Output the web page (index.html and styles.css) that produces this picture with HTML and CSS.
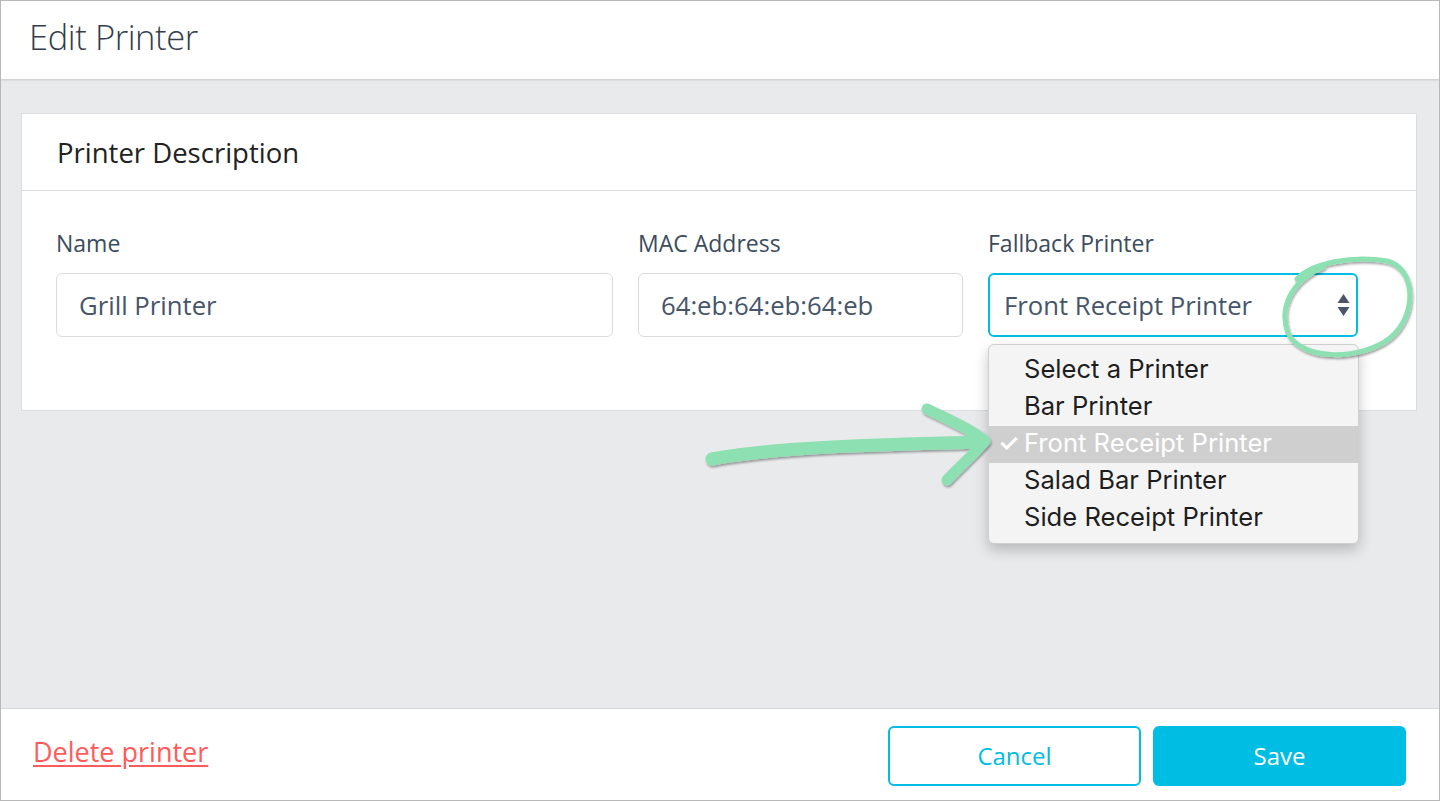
FILE: index.html
```html
<!DOCTYPE html>
<html lang="en">
<head>
    <meta charset="UTF-8">
    <meta name="viewport" content="width=device-width, initial-scale=1.0">
    <title>Edit Printer</title>
    <link rel="stylesheet" href="styles.css">
</head>
<body>
    <div class="window">
        <header class="topbar">
            <h1>Edit Printer</h1>
        </header>

        <main class="content">
            <section class="card">
                <h2 class="card-head">Printer Description</h2>
                <div class="card-body">
                    <div class="field">
                        <label for="printerName">Name</label>
                        <input type="text" id="printerName" value="Grill Printer" />
                    </div>
                    <div class="field">
                        <label for="macAddress">MAC Address</label>
                        <input type="text" id="macAddress" value="64:eb:64:eb:64:eb" />
                    </div>
                    <div class="field fallback">
                        <label>Fallback Printer</label>
                        <div class="select">
                            <span>Front Receipt Printer</span>
                            <svg class="arrows" width="13" height="26" viewBox="0 0 13 26">
                                <path d="M6.5 2 L12.5 11 L0.5 11 Z" fill="#4a5568" />
                                <path d="M6.5 24 L12.5 15 L0.5 15 Z" fill="#4a5568" />
                            </svg>
                        </div>
                        <!-- open native menu -->
                        <ul class="menu">
                            <li>Select a Printer</li>
                            <li>Bar Printer</li>
                            <li class="checked"><span class="tick">&#10003;</span>Front Receipt Printer</li>
                            <li>Salad Bar Printer</li>
                            <li>Side Receipt Printer</li>
                        </ul>
                    </div>
                </div>
            </section>
        </main>

        <footer class="actions">
            <a href="#" class="delete">Delete printer</a>
            <div class="buttons">
                <button class="btn-outline">Cancel</button>
                <button class="btn-primary">Save</button>
            </div>
        </footer>

        <!-- hand drawn marks -->
        <svg class="marks" width="1440" height="801" viewBox="0 0 1440 801">
            <defs>
                <filter id="shade" x="-10%" y="-10%" width="120%" height="130%">
                    <feDropShadow dx="1" dy="2" stdDeviation="1.2" flood-color="#000" flood-opacity="0.35" />
                </filter>
            </defs>
            <g fill="none" stroke="#8de0b2" stroke-linecap="round" stroke-linejoin="round" filter="url(#shade)">
                <path stroke-width="5" d="M1297 279 C1312 263 1352 255 1387 261 C1416 268 1418 315 1390 338 C1362 360 1302 362 1288 333 C1279 308 1290 282 1323 267" />
                <path stroke-width="13" d="M712 459 C780 446 900 444 982 442" />
                <path stroke-width="11" d="M927 409 C950 420 972 430 985 441 C973 455 958 468 947 480" />
            </g>
        </svg>
    </div>
</body>
</html>
```

FILE: styles.css
```css
* {
    box-sizing: border-box;
}
body {
    margin: 0;
    font-family: "Open Sans", Arial, sans-serif;
    color: #333d4d;
}
.window {
    position: relative;
    width: 1440px;
    height: 801px;
    border: 1px solid #b8b8b8;
    display: flex;
    flex-direction: column;
    background-color: #e9eaec;
    overflow: hidden;
}
.topbar {
    height: 78px;
    background-color: #fff;
    box-shadow: 0 1px 2px rgba(0, 0, 0, 0.15);
    padding: 0 0 7px 28px;
    display: flex;
    align-items: center;
}
.topbar h1 {
    margin: 0;
    font-size: 34.5px;
    font-weight: 300;
    color: #333d4d;
    letter-spacing: -0.4px;
}
.content {
    flex: 1;
    padding: 34px 22px 0 20px;
}
.card {
    background-color: #fff;
    border: 1px solid #dcdde0;
}
.card-head {
    margin: 0;
    height: 77px;
    padding-left: 35px;
    display: flex;
    align-items: center;
    font-size: 27.5px;
    font-weight: 400;
    color: #222;
    border-bottom: 1px solid #dcdde0;
}
.card-body {
    display: grid;
    grid-template-columns: 557px 325px 370px;
    column-gap: 25px;
    padding: 38px 0 73px 34px;
}
.field {
    display: flex;
    flex-direction: column;
}
.field label {
    font-size: 23px;
    color: #3c4b5d;
    margin-bottom: 16px;
    line-height: 28px;
}
.field input,
.select {
    height: 64px;
    border: 1px solid #dadbde;
    border-radius: 6px;
    padding: 0 22px;
    font-family: inherit;
    font-size: 25.7px;
    color: #46556a;
    background: #fff;
}
.fallback {
    position: relative;
}
.select {
    border: 2px solid #00bde3;
    display: flex;
    align-items: center;
    justify-content: space-between;
    padding: 0 6px 0 14px;
}
.menu {
    position: absolute;
    left: 0;
    top: 115px;
    width: 371px;
    margin: 0;
    padding: 7px 0 6px;
    list-style: none;
    background-color: #f4f4f4;
    border: 1px solid #cfcfcf;
    border-radius: 6px;
    box-shadow: 0 6px 14px rgba(0, 0, 0, 0.22);
    font-family: Inter, "Liberation Sans", Arial, sans-serif;
    font-size: 25.6px;
    color: #1e1e1e;
    z-index: 2;
}
.menu li {
    height: 37px;
    line-height: 33px;
    padding-left: 35px;
    position: relative;
}
.menu li.checked {
    background-color: #cfcfcf;
    color: #fff;
}
.tick {
    position: absolute;
    left: 9px;
    font-size: 24px;
    font-weight: 600;
}
.actions {
    height: 92px;
    background-color: #fff;
    border-top: 1px solid #d6d7da;
    display: flex;
    align-items: center;
    justify-content: space-between;
    padding: 0 33px 0 32px;
}
.delete {
    font-size: 27px;
    color: #ff5b5b;
    text-decoration: underline;
    text-underline-offset: 3px;
    margin-bottom: 6px;
}
.buttons {
    display: flex;
    gap: 12px;
    margin-top: 2px;
}
.buttons button {
    width: 253px;
    height: 60px;
    border-radius: 6px;
    font-family: inherit;
    font-size: 24px;
    cursor: pointer;
}
.btn-outline {
    background-color: #fff;
    border: 2px solid #00bde3;
    color: #00bde3;
}
.btn-primary {
    background-color: #00bde3;
    border: none;
    color: #fff;
}
.marks {
    position: absolute;
    left: -1px;
    top: -1px;
    pointer-events: none;
    z-index: 3;
}
```
